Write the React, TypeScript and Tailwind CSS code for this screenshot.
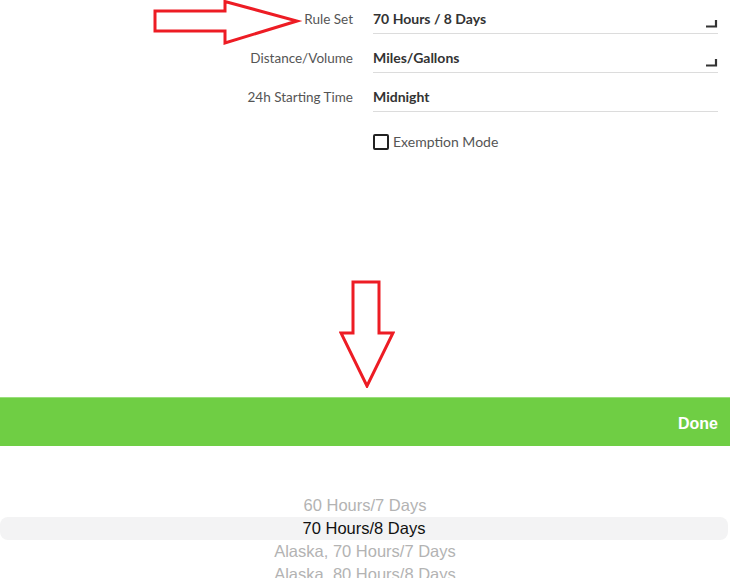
import React from "react";

// form rows at the top of the settings screen
const rows = [
  { label: "Rule Set", value: "70 Hours / 8 Days", picker: true },
  { label: "Distance/Volume", value: "Miles/Gallons", picker: true },
  { label: "24h Starting Time", value: "Midnight", picker: false },
];

const options = [
  "60 Hours/7 Days",
  "70 Hours/8 Days",
  "Alaska, 70 Hours/7 Days",
  "Alaska, 80 Hours/8 Days",
];

const CornerMark = () => (
  <svg width="13" height="9" viewBox="0 0 13 9" className="mb-[5px] shrink-0">
    <path d="M1 7.5 H11 V1" fill="none" stroke="#333" strokeWidth="2.2" />
  </svg>
);

export default function App() {
  return (
    <div className="relative w-[730px] h-[578px] overflow-hidden bg-white" style={{ fontFamily: "Lato, 'Open Sans', sans-serif" }}>
      {/* annotation arrow pointing at Rule Set */}
      <svg width="160" height="50" viewBox="150 0 160 50" className="absolute left-[150px] top-0">
        <polygon
          points="155,11 225,11 225,1.5 297,21 225,43 225,31 155,31"
          fill="white"
          stroke="#ed1c24"
          strokeWidth="3"
          strokeLinejoin="miter"
        />
      </svg>

      <div className="flex flex-col">
        {rows.map((r) => (
          <div key={r.label} className="flex mb-[5px]">
            <div className="w-[353px] text-right pt-[11px] text-[13.5px] leading-4 text-[#555]">{r.label}</div>
            <div className="ml-[20px] w-[345px] h-[34px] flex items-end justify-between border-b border-[#dcdcdc]">
              <span className="self-start pt-[11px] text-[14px] leading-4 font-bold text-[#333]">{r.value}</span>
              {r.picker && <CornerMark />}
            </div>
          </div>
        ))}

        <div className="flex items-center ml-[373px] mt-[17px] gap-[4px]">
          <div className="w-[16px] h-[16px] border-2 border-[#222] rounded-[2px]" />
          <span className="text-[14px] leading-4 text-[#555]">Exemption Mode</span>
        </div>
      </div>

      {/* annotation arrow pointing down to the picker */}
      <div className="flex justify-start pl-[339px] pt-[130px] h-[247px]">
        <svg width="56" height="108" viewBox="339 279 56 108">
          <polygon
            points="353,281 379,281 379,332 393,332 367,385 341,332 353,332"
            fill="white"
            stroke="#ed1c24"
            strokeWidth="3"
          />
        </svg>
      </div>

      <div className="h-[49px] bg-[#6fce44] border-t border-[#9adf7c] flex items-center justify-end pr-[12px]">
        <span className="text-[16px] font-bold text-white pt-[3px]" style={{ fontFamily: "'Liberation Sans', Arial, sans-serif" }}>
          Done
        </span>
      </div>

      <div className="h-[132px] overflow-hidden pt-[48px]" style={{ fontFamily: "'Liberation Sans', Arial, sans-serif" }}>
        {options.map((o, i) => (
          <div
            key={o}
            className={
              i === 1
                ? "h-[23px] leading-[23px] text-center text-[16.5px] text-[#111] bg-[#f3f3f4] rounded-lg mr-[2px]"
                : "h-[23px] leading-[23px] text-center text-[16.5px] text-[#b3b3b3]"
            }
          >
            {o}
          </div>
        ))}
      </div>
    </div>
  );
}
